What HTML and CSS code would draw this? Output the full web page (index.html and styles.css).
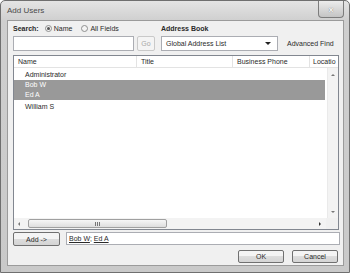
FILE: index.html
```html
<!DOCTYPE html>
<html lang="en">
<head>
    <meta charset="UTF-8">
    <title>Add Users</title>
    <link rel="stylesheet" href="styles.css">
</head>
<body>
    <div class="window">
        <div class="titlebar">
            <span class="title">Add Users</span>
            <button class="close">x</button>
        </div>
        <div class="client">
            <div class="top-row">
                <div class="search-group">
                    <b>Search:</b>
                    <span class="radio checked"></span><span>Name</span>
                    <span class="radio gap"></span><span>All Fields</span>
                </div>
                <b>Address Book</b>
            </div>
            <div class="field-row">
                <div class="textbox query"></div>
                <button class="go" disabled>Go</button>
                <div class="combo"><span>Global Address List</span><span class="caret"></span></div>
                <span class="adv">Advanced Find</span>
            </div>

            <div class="list">
                <div class="list-head">
                    <div class="col c-name">Name</div>
                    <div class="col c-title">Title</div>
                    <div class="col c-phone">Business Phone</div>
                    <div class="col c-loc">Locatio</div>
                </div>
                <div class="list-main">
                    <div class="rows">
                        <div class="row">Administrator</div>
                        <div class="row sel">Bob W</div>
                        <div class="row sel">Ed A</div>
                        <div class="row spaced">William S</div>
                    </div>
                    <div class="vscroll">
                        <span class="arr up"></span>
                        <span class="arr down"></span>
                    </div>
                </div>
                <div class="hscroll-row">
                    <div class="hscroll">
                        <span class="arr left"></span>
                        <span class="thumb"><span class="grip"></span></span>
                        <span class="arr right"></span>
                    </div>
                    <div class="corner"></div>
                </div>
            </div>

            <div class="add-row">
                <button class="btn add">Add -&gt;</button>
                <div class="textbox picked"><u>Bob W</u>; <u>Ed A</u></div>
            </div>
            <div class="btn-row">
                <button class="btn">OK</button>
                <button class="btn">Cancel</button>
            </div>
        </div>
    </div>
</body>
</html>
```

FILE: styles.css
```css
* { box-sizing: border-box; }
body { margin: 0; font-family: "Liberation Sans", Arial, sans-serif; font-size: 7px; color: #2a2a2a; background: #fff; }
button { font-family: inherit; font-size: 7px; color: #2a2a2a; padding: 0; }

.window { width: 350px; height: 273px; display: flex; flex-direction: column; border: 1px solid #6f6f6f; border-radius: 5px 5px 0 0; background: linear-gradient(#e4e4e4, #cfcfcf 20px, #c9c9c9); }
.titlebar { height: 19px; display: flex; align-items: center; padding-left: 6px; position: relative; }
.title { font-size: 8px; color: #4a4a4a; }
.close { position: absolute; right: 5px; top: 0; width: 26px; height: 17px; border: 1px solid #7c7c7c; border-top: none; border-radius: 0 0 4px 4px; background: linear-gradient(#ececec, #c4c4c4); color: #fff; font-size: 8px; font-weight: bold; text-shadow: 0 0 1px #555; }

.client { flex: 1; margin: 0 5px 6px 6px; background: #f0f0f0; border: 1px solid #9b9b9b; padding: 2px 4px 0 5px; display: flex; flex-direction: column; }

.top-row { height: 10px; display: flex; align-items: center; }
.search-group { width: 148px; display: flex; align-items: center; }
.search-group b { margin-right: 6px; }
.radio { width: 7px; height: 7px; border-radius: 50%; border: 1px solid #8e8f8f; background: #f4f4f4; margin-right: 2px; position: relative; }
.radio.checked::after { content: ""; position: absolute; left: 1px; top: 1px; width: 3px; height: 3px; border-radius: 50%; background: #555; }
.radio.gap { margin-left: 9px; }

.field-row { height: 15px; margin-top: 3px; display: flex; align-items: stretch; }
.textbox { background: #fff; border: 1px solid #abadb3; }
.query { width: 121px; }
.go { width: 18px; margin-left: 3px; border: 1px solid #c9c9c9; border-radius: 2px; background: #f4f4f4; color: #a8a8a8; }
.combo { width: 117px; margin-left: 6px; background: #fff; border: 1px solid #abadb3; display: flex; align-items: center; justify-content: space-between; padding: 0 6px 0 4px; }
.caret { width: 0; height: 0; border-left: 3px solid transparent; border-right: 3px solid transparent; border-top: 3px solid #222; }
.adv { margin-left: 9px; align-self: center; }

.list { height: 175px; margin-top: 4px; border: 1px solid #828790; background: #fff; display: flex; flex-direction: column; }
.list-head { height: 12px; display: flex; border-bottom: 1px solid #e3e3e3; }
.col { padding-left: 4px; line-height: 11px; border-right: 1px solid #e3e3e3; white-space: nowrap; overflow: hidden; }
.c-name { width: 123px; }
.c-title { width: 96px; }
.c-phone { width: 77px; }
.c-loc { flex: 1; padding-left: 3px; border-right: none; }

.list-main { flex: 1; display: flex; }
.rows { flex: 1; padding: 2px 2px 0 0; }
.row { height: 10px; line-height: 10px; padding-left: 11px; }
.row.sel { background: #999; color: #fff; }
.row.spaced { margin-top: 2px; }

.vscroll { width: 11px; background: #f3f3f3; border-left: 1px solid #eaeaea; display: flex; flex-direction: column; justify-content: space-between; align-items: center; padding: 6px 0 5px; }
.arr { width: 0; height: 0; }
.up { border-left: 2px solid transparent; border-right: 2px solid transparent; border-bottom: 2px solid #777; }
.down { border-left: 2px solid transparent; border-right: 2px solid transparent; border-top: 2px solid #777; }
.left { border-top: 2px solid transparent; border-bottom: 2px solid transparent; border-right: 2px solid #777; margin: 0 8px 0 4px; }
.right { border-top: 2px solid transparent; border-bottom: 2px solid transparent; border-left: 2px solid #333; margin-left: auto; margin-right: 5px; }

.hscroll-row { height: 11px; display: flex; }
.hscroll { flex: 1; background: #f3f3f3; display: flex; align-items: center; }
.thumb { width: 139px; height: 9px; border: 1px solid #a0a0a0; border-radius: 2px; background: linear-gradient(#f6f6f6, #dedede); display: flex; align-items: center; justify-content: center; }
.grip { width: 5px; height: 4px; border-left: 1px solid #777; border-right: 1px solid #777; position: relative; }
.grip::after { content: ""; position: absolute; left: 1px; top: 0; width: 1px; height: 4px; background: #777; }
.corner { width: 12px; background: #f0f0f0; }

.add-row { height: 14px; margin-top: 2px; display: flex; }
.btn { width: 46px; height: 13px; border: 1px solid #707070; border-radius: 2px; background: linear-gradient(#f4f4f4 50%, #dddddd 50%, #d4d4d4); }
.add { width: 47px; height: 14px; }
.picked { flex: 1; margin-left: 6px; height: 13px; padding-left: 2px; line-height: 11px; margin-right: -1px; }

.btn-row { margin-top: 4px; display: flex; justify-content: flex-end; gap: 8px; padding-right: 1px; }
```
